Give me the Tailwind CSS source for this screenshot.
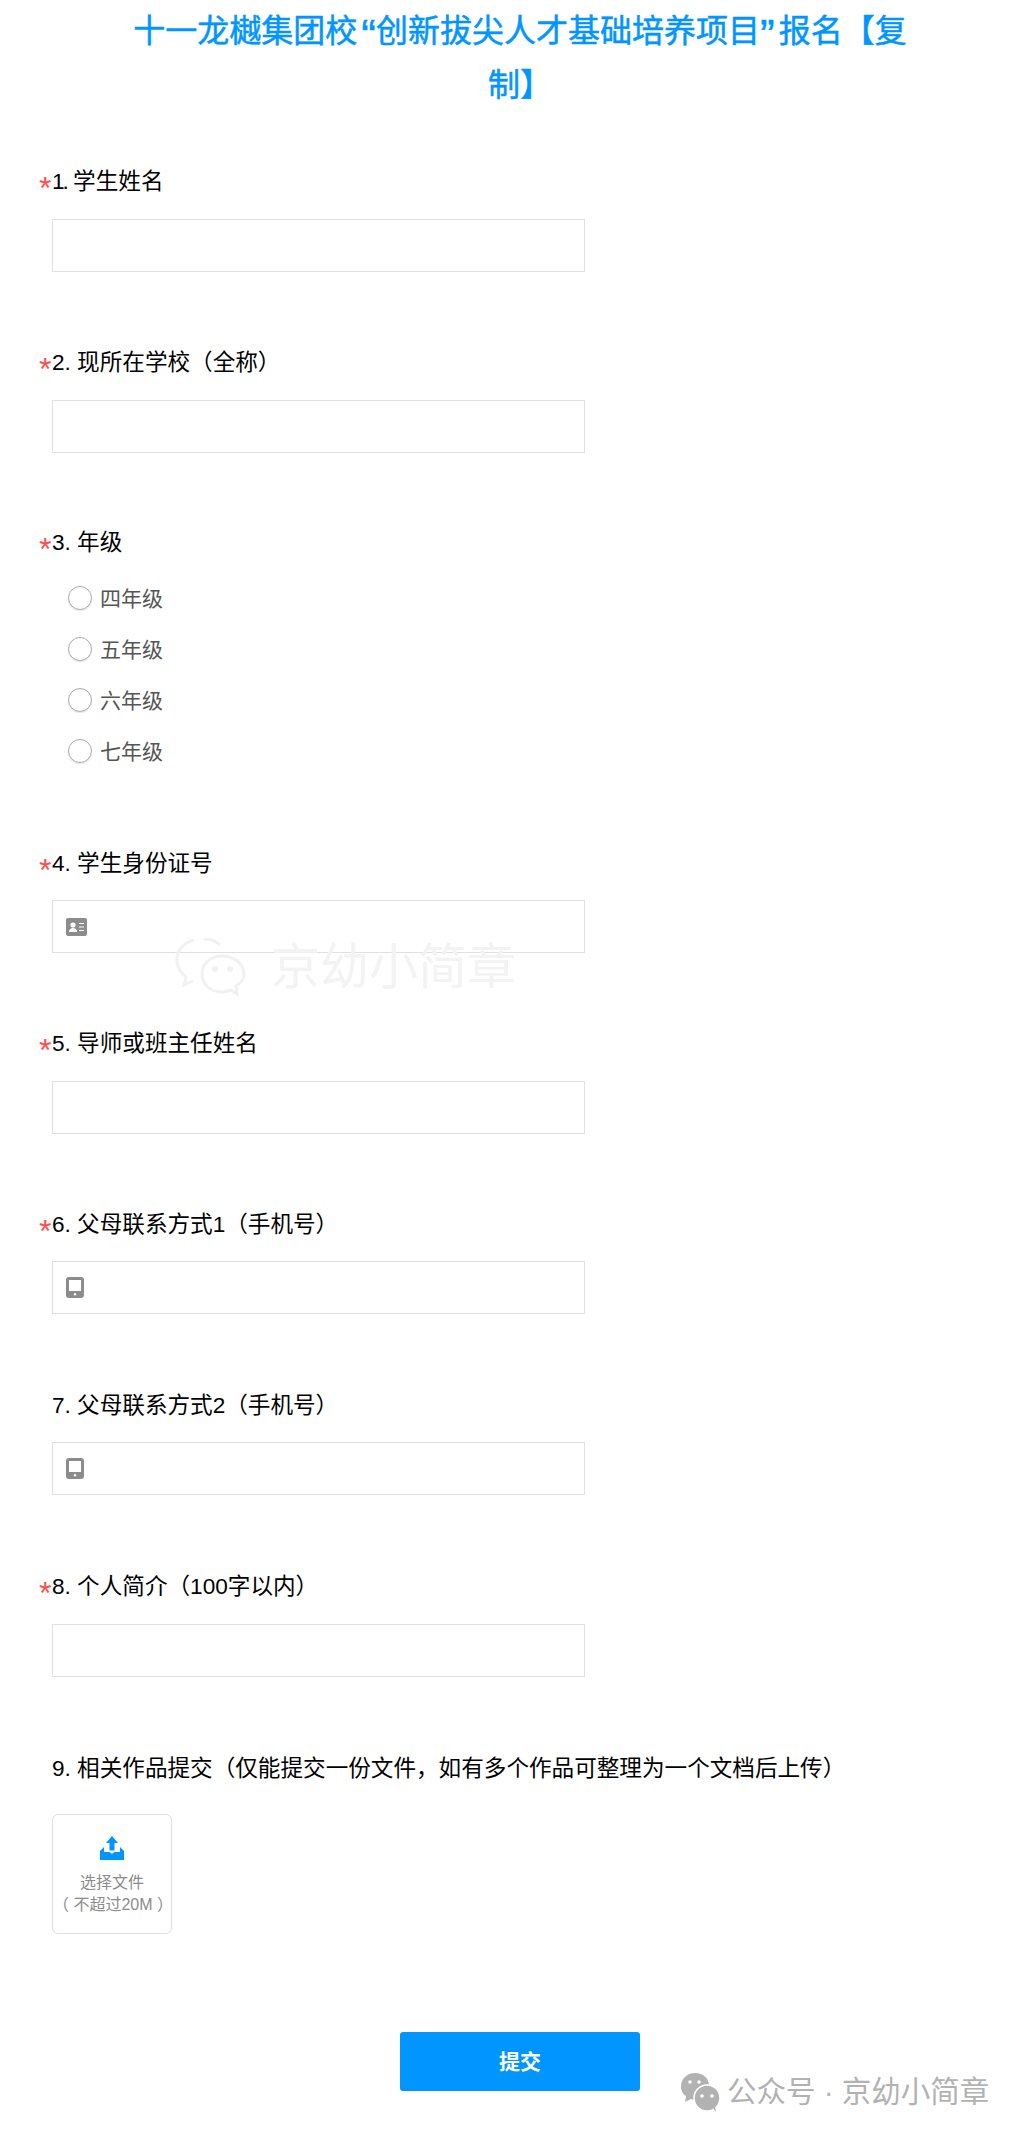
<!DOCTYPE html>
<html lang="zh-CN">
<head>
    <meta charset="UTF-8">
    <meta name="viewport" content="width=device-width, initial-scale=1.0">
    <title>报名表</title>
    <script src="https://cdn.jsdelivr.net/npm/@tailwindcss/browser@4"></script>
</head>
<body class="bg-white font-['Liberation_Sans','Noto_Sans_CJK_SC',sans-serif]">
<div class="relative w-[1022px] h-[2133px] overflow-hidden">
    <!-- Title -->
    <h1 class="pt-[4px] w-[800px] ml-[120px] text-center text-[32px] leading-[54px] font-normal [-webkit-text-stroke:0.5px_#0095ff] text-[#0095ff]">十一龙樾集团校<span class="relative top-[9px] ml-[4px] text-[44px] leading-[0]">“</span>创新拔尖人才基础培养项目<span class="relative top-[9px] mr-[4px] text-[44px] leading-[0]">”</span>报名【复制】</h1>

    <form class="mt-[55px]">
        <!-- 1 -->
        <section class="h-[181px]">
            <div class="flex ml-[39px] text-[22.600px] leading-[30px] text-black"><span class="w-[13px] h-[30px] text-[32px] leading-[30px] pt-[6px] text-[#ff4d4f]">*</span><span><span class="tracking-[-2px]">1.</span> 学生姓名</span></div>
            <div class="mt-[22px] ml-[52px] w-[533px] h-[53px] border border-[#e0e0e0]"></div>
        </section>
        <!-- 2 -->
        <section class="h-[180px]">
            <div class="flex ml-[39px] text-[22.600px] leading-[30px] text-black"><span class="w-[13px] h-[30px] text-[32px] leading-[30px] pt-[6px] text-[#ff4d4f]">*</span>2. 现所在学校（全称）</div>
            <div class="mt-[22px] ml-[52px] w-[533px] h-[53px] border border-[#e0e0e0]"></div>
        </section>
        <!-- 3 -->
        <section class="h-[321px]">
            <div class="flex ml-[39px] text-[22.600px] leading-[30px] text-black"><span class="w-[13px] h-[30px] text-[32px] leading-[30px] pt-[6px] text-[#ff4d4f]">*</span>3. 年级</div>
            <div class="mt-[14px] ml-[68px] text-[21px] text-[#555555]">
                <label class="flex items-center gap-[8px] h-[51px]"><span class="w-[24px] h-[24px] rounded-full border border-[#aaaaaa] shadow-[0_1px_1px_rgba(0,0,0,0.12)]"></span><span class="pt-[2px]">四年级</span></label>
                <label class="flex items-center gap-[8px] h-[51px]"><span class="w-[24px] h-[24px] rounded-full border border-[#aaaaaa] shadow-[0_1px_1px_rgba(0,0,0,0.12)]"></span><span class="pt-[2px]">五年级</span></label>
                <label class="flex items-center gap-[8px] h-[51px]"><span class="w-[24px] h-[24px] rounded-full border border-[#aaaaaa] shadow-[0_1px_1px_rgba(0,0,0,0.12)]"></span><span class="pt-[3px]">六年级</span></label>
                <label class="flex items-center gap-[8px] h-[51px]"><span class="w-[24px] h-[24px] rounded-full border border-[#aaaaaa] shadow-[0_1px_1px_rgba(0,0,0,0.12)]"></span><span class="pt-[2px]">七年级</span></label>
            </div>
        </section>
        <!-- 4 -->
        <section class="h-[180px]">
            <div class="flex ml-[39px] text-[22.600px] leading-[30px] text-black"><span class="w-[13px] h-[30px] text-[32px] leading-[30px] pt-[6px] text-[#ff4d4f]">*</span>4. 学生身份证号</div>
            <div class="flex items-center pl-[13px] mt-[21px] ml-[52px] w-[533px] h-[53px] border border-[#e0e0e0]">
                <svg class="w-[21px] h-[18px]" viewBox="0 0 21 18"><rect width="21" height="18" rx="2" fill="#8c8c8c"/><circle cx="7" cy="7" r="2.600" fill="#fff"/><path d="M3 14c0-3 2-4 4-4s4 1 4 4z" fill="#fff"/><path d="M13 5.500h5M13 9h5M13 12.500h5" stroke="#fff" stroke-width="1"/></svg>
            </div>
        </section>
        <!-- 5 -->
        <section class="h-[181px]">
            <div class="flex ml-[39px] text-[22.600px] leading-[30px] text-black"><span class="w-[13px] h-[30px] text-[32px] leading-[30px] pt-[6px] text-[#ff4d4f]">*</span>5. 导师或班主任姓名</div>
            <div class="mt-[22px] ml-[52px] w-[533px] h-[53px] border border-[#e0e0e0]"></div>
        </section>
        <!-- 6 -->
        <section class="h-[181px]">
            <div class="flex ml-[39px] text-[22.600px] leading-[30px] text-black"><span class="w-[13px] h-[30px] text-[32px] leading-[30px] pt-[6px] text-[#ff4d4f]">*</span>6. 父母联系方式1（手机号）</div>
            <div class="flex items-center pl-[13px] mt-[21px] ml-[52px] w-[533px] h-[53px] border border-[#e0e0e0]">
                <svg class="w-[18px] h-[21px]" viewBox="0 0 18 21"><rect width="18" height="21" rx="3" fill="#8c8c8c"/><rect x="3" y="3" width="12" height="11" fill="#fff"/><circle cx="9" cy="17.300" r="1.200" fill="#fff"/></svg>
            </div>
        </section>
        <!-- 7 -->
        <section class="h-[181px]">
            <div class="ml-[52px] text-[22.600px] leading-[30px] text-black">7. 父母联系方式2（手机号）</div>
            <div class="flex items-center pl-[13px] mt-[21px] ml-[52px] w-[533px] h-[53px] border border-[#e0e0e0]">
                <svg class="w-[18px] h-[21px]" viewBox="0 0 18 21"><rect width="18" height="21" rx="3" fill="#8c8c8c"/><rect x="3" y="3" width="12" height="11" fill="#fff"/><circle cx="9" cy="17.300" r="1.200" fill="#fff"/></svg>
            </div>
        </section>
        <!-- 8 -->
        <section class="h-[182px]">
            <div class="flex ml-[39px] text-[22.600px] leading-[30px] text-black"><span class="w-[13px] h-[30px] text-[32px] leading-[30px] pt-[6px] text-[#ff4d4f]">*</span>8. 个人简介（100字以内）</div>
            <div class="mt-[22px] ml-[52px] w-[533px] h-[53px] border border-[#e0e0e0]"></div>
        </section>
        <!-- 9 -->
        <section>
            <div class="ml-[52px] text-[22.600px] leading-[30px] text-black">9. 相关作品提交（仅能提交一份文件，如有多个作品可整理为一个文档后上传）</div>
            <div class="mt-[30px] ml-[52px] w-[120px] h-[120px] flex flex-col items-center border border-[#e0e0e0] rounded-[6px] text-[16px] leading-[22px] text-[#8c8c8c]">
                <svg class="mt-[21px] w-[24px] h-[24px]" viewBox="0 0 24 24" fill="#0095ff"><path d="M12 0l6 7h-3.500v7.500h-5V7H6z"/><path d="M0 15l4-4v5h5.500l2.500 2 2.500-2H20v-5l4 4v9H0z"/></svg>
                <div class="mt-[12px]">选择文件</div>
                <div>（ 不超过20M ）</div>
            </div>
        </section>
        <button type="button" class="block mt-[98px] ml-[400px] w-[240px] h-[59px] bg-[#0095ff] rounded-[3px] text-white text-[21px] font-bold">提交</button>
    </form>

    <!-- Watermark over the form -->
    <div class="absolute left-[174px] top-[938px] flex items-center gap-[25px] text-[49px] leading-[56px] text-[#f3f3f3]">
        <svg class="w-[72px] h-[58px]" viewBox="0 0 72 58" fill="none" stroke="#f1f1f1" stroke-width="3"><path d="M20 2C8 5 2 14 3 24c1 7 5 12 9 15l-2 8 9-4"/><path d="M30 1c6 0 12 2 16 6"/><path d="M48 18c-12 0-20 8-20 18s8 18 20 18c4 0 6-1 9-2l6 4-1-8c5-3 8-7 8-12 0-10-10-18-22-18z"/><circle cx="41" cy="31" r="1.500" fill="#e8e8e8"/><circle cx="56" cy="31" r="1.500" fill="#e8e8e8"/></svg>
        <span>京幼小简章</span>
    </div>

    <!-- Watermark bottom right -->
    <div class="absolute left-[680px] top-[2072px] flex items-center gap-[7px] text-[29.500px] leading-[40px] text-[#b2b2b2]">
        <svg class="w-[40px] h-[40px]" viewBox="0 0 40 40"><path d="M15 1C7 1 1 7 1 14c0 5 2 8 5 10l-1 6 6-3c1 0 2 1 4 1 8 0 14-6 14-14S23 1 15 1z" fill="#b2b2b2"/><circle cx="27" cy="26" r="13" fill="#b2b2b2" stroke="#fff" stroke-width="1.500"/><path d="M33 36l3 4-1-6z" fill="#b2b2b2"/><circle cx="10" cy="10" r="1.800" fill="#fff"/><circle cx="19" cy="10" r="1.800" fill="#fff"/><circle cx="22" cy="24" r="1.800" fill="#fff"/><circle cx="32" cy="24" r="1.800" fill="#fff"/></svg>
        <span>公众号 · 京幼小简章</span>
    </div>
</div>
</body>
</html>
